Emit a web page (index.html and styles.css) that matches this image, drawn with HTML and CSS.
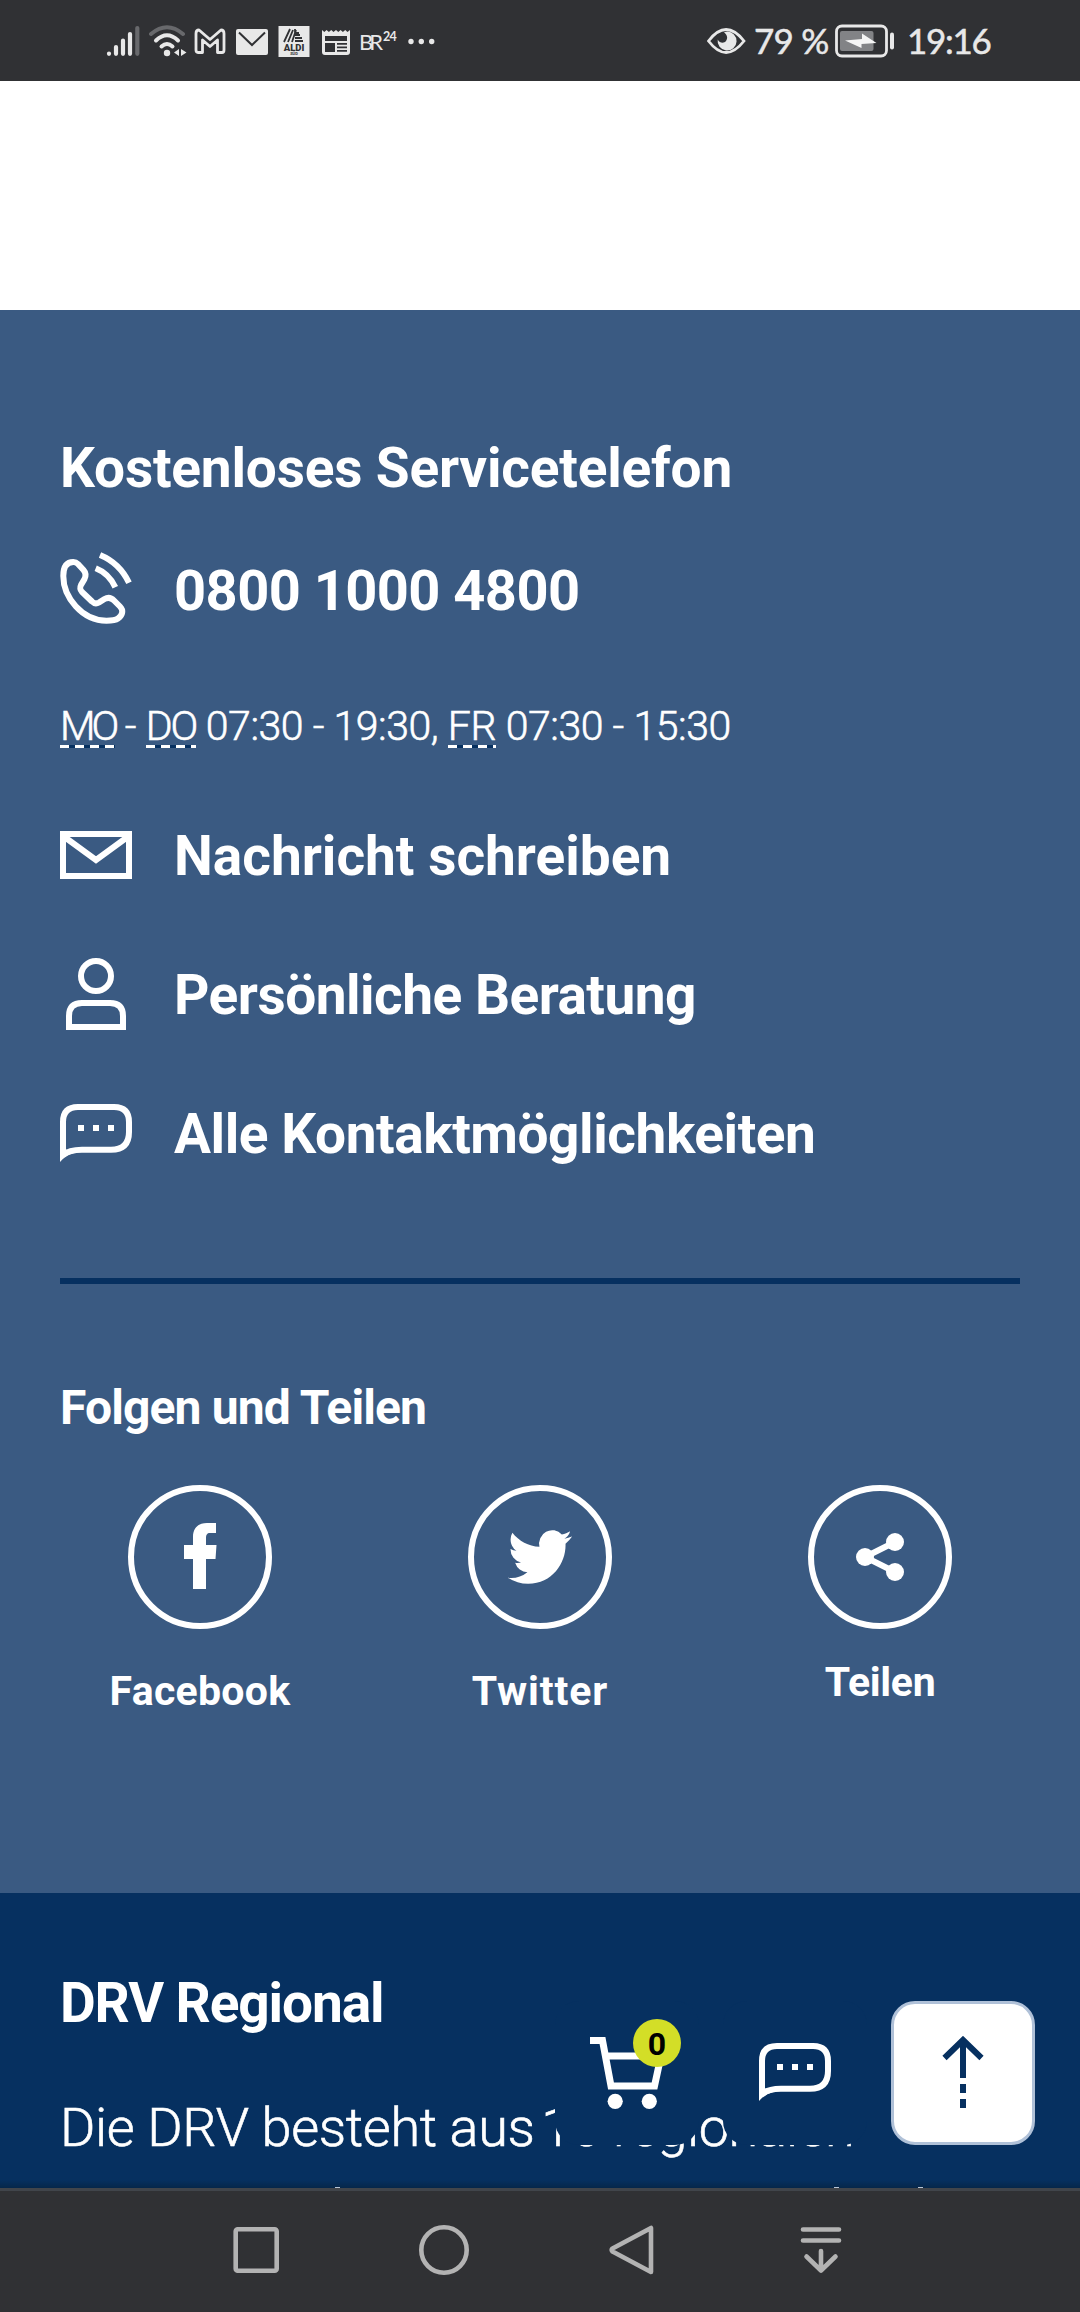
FILE: index.html
```
<!DOCTYPE html>
<html lang="de">
<head>
<meta charset="utf-8">
<title>Deutsche Rentenversicherung</title>
<link rel="stylesheet" href="styles.css">
</head>
<body>
<div class="statusbar">
  <div class="notifications">
    <svg class="signal" width="34" height="32" viewBox="0 0 34 32" fill="none" stroke="#e8e8e8" stroke-width="4.2" stroke-linecap="round">
      <path d="M3 28.5v.3M10 22v6.8M17 15.500v13.300M24 9v19.800"/><path d="M31.300 3v25.800" stroke="#68696c"/>
    </svg>
    <svg class="wifi" width="39" height="32" viewBox="0 0 39 32" fill="none" stroke="#e8e8e8" stroke-width="4" stroke-linecap="round">
      <path d="M2 9Q18 -4.500 34 9" stroke="#68696c"/><path d="M7 15.500Q18 5 29 15.500M12.500 21.500Q18 16.500 23.500 21.500"/><circle cx="18" cy="28" r="3.200" fill="#e8e8e8" stroke="none"/>
      <path d="M30 24v7l-5-3.500zM32 24l5.500 3.500-5.500 3.500z" fill="#e8e8e8" stroke="none"/>
    </svg>
    <svg class="gmail" width="32" height="32" viewBox="0 0 32 32" fill="none" stroke="#e8e8e8" stroke-width="2.800" stroke-linejoin="round">
      <path d="M2 8.500Q2 5 5 5L16 14.500 27 5Q30 5 30 8.500V25Q30 27.500 28 27.500H23.500V15L16 21.500 8.500 15V27.500H4Q2 27.500 2 25Z"/>
    </svg>
    <svg class="mail-note" width="32" height="32" viewBox="0 0 32 32"><rect y="4" width="32" height="26" rx="2" fill="#e8e8e8"/><path d="M3 7.500L16 20 29 7.500" fill="none" stroke="#303134" stroke-width="2"/></svg>
    <svg class="aldi" width="32" height="32" viewBox="0 0 32 32"><rect x=".5" y="1" width="31" height="31" fill="#e8e8e8"/><path d="M6 17L12 4M10 17L15 5M14 17L18 5M17 4v4h4M17 10h5M17 13h7M17 16h8" fill="none" stroke="#303134" stroke-width="1.800"/><text x="16" y="25.500" class="aldi-name">ALDI</text><text x="16" y="30.300" class="aldi-sub">SÜD</text></svg>
    <svg class="news" width="28" height="32" viewBox="0 0 28 32"><path d="M0 5l2.300 2 2.300-2 2.300 2 2.300-2 2.300 2 2.500-2 2.300 2 2.300-2 2.300 2 2.300-2 2.300 2 2.500-2V27q0 3-3 3H3q-3 0-3-3z" fill="#e8e8e8"/><path d="M3 11h22v5H3zM3 18h10v9H3zM15 18h10v1.800H15zM15 21.500h10v1.800H15zM15 25h10v1.800H15z" fill="#303134"/></svg>
    <div class="br">BR<sup>24</sup></div>
    <svg class="more" width="27" height="32" viewBox="0 0 27 32" fill="#e8e8e8"><circle cx="3" cy="16.500" r="2.700"/><circle cx="13.300" cy="16.500" r="2.700"/><circle cx="23.700" cy="16.500" r="2.700"/></svg>
  </div>
  <div class="system">
    <svg width="39" height="32" viewBox="0 0 39 32"><path d="M1.500 16Q19 -7 37 16Q19 39 1.500 16Z" fill="none" stroke="#e8e8e8" stroke-width="2.800"/><path d="M20 6.500a9.500 9.500 0 1 1-9.300 8c2 4 6.500 4 8.300 1.500 2.300-3.200 1-6-2-8.700z" fill="#e8e8e8"/></svg>
    <span class="percent">79 %</span>
    <svg width="60" height="34" viewBox="0 0 60 34"><rect x="1.500" y="2" width="50" height="30" rx="5.500" fill="none" stroke="#e8e8e8" stroke-width="2.800"/><rect x="5" y="7" width="33.500" height="20" rx="2" fill="#828386"/><path d="M10 16.500l17-1.500V9.500L41.500 19 26.500 20v4z" fill="#f5f5f5"/><rect x="55" y="8.500" width="4" height="17" rx="2" fill="#e8e8e8"/></svg>
    <span class="clock">19:16</span>
  </div>
</div>

<main>
<section class="contact">
  <h2 class="heading">Kostenloses Servicetelefon</h2>
  <a class="row phone">
    <svg width="72" height="72" viewBox="0 0 72 72" fill="none" stroke="#fff" stroke-width="6">
      <path d="M13.300 10C16 10 17 11 18 12L23.500 18C26.500 21.500 26 24 24.500 27L21 33C19.500 36 20 37.500 22 40L32 49.500C34.500 52 36.500 52 39 50.500L44.500 47C48 45 51 45.500 54 48.500L60 54.500C63.500 58 63 63 58 66.500C55 68.700 51 68.700 46.500 68.700C22 68.700 3.300 45 3.300 24C3.300 14.500 7 10 13.300 10Z"/>
      <path d="M35.700 16.300Q49 21.500 55.300 35.300M40 3Q59.500 11 69 30.700"/>
    </svg>
    <span>0800 1000 4800</span>
  </a>
  <p class="hours"><abbr class="mo">MO</abbr> - <abbr class="do">DO</abbr> 07:30 - 19:30, <abbr class="fr">FR</abbr> 07:30 - 15:30</p>
  <div class="links">
    <a class="row write">
      <svg width="72" height="72" viewBox="0 0 72 72" fill="none" stroke="#fff" stroke-width="6"><path d="M3 15H69V57H3ZM4.500 18L36 41 67.500 18"/></svg>
      <span>Nachricht schreiben</span>
    </a>
    <a class="row advice">
      <svg width="72" height="72" viewBox="0 0 72 72" fill="none" stroke="#fff" stroke-width="6"><circle cx="36" cy="18" r="15"/><path d="M9 69V58Q9 45 22 45H50Q63 45 63 58V69Z"/></svg>
      <span>Persönliche Beratung</span>
    </a>
    <a class="row all">
      <svg width="72" height="72" viewBox="0 -7 72 72" fill="none" stroke="#fff" stroke-width="6"><path d="M3 49V18Q3 3 18 3H54Q69 3 69 18V28Q69 45.700 51 45.700H22Q9 45.700 3 51"/><path d="M0 58V44L8 46 14 49Q6 51 0 58Z" fill="#fff" stroke="none"/><path d="M18 24h6M33 24h6M48 24h6"/></svg>
      <span>Alle Kontaktmöglichkeiten</span>
    </a>
  </div>
  <hr>
  <h3 class="follow">Folgen und Teilen</h3>
  <div class="social">
    <a class="facebook"><svg width="144" height="144" viewBox="0 0 144 144"><circle cx="72" cy="72" r="69" fill="none" stroke="#fff" stroke-width="6"/><path d="M65 104V74H56V60H65V52C65 43 70 38 79 38H88V48H82C79 48 78 50 78 53V60H88.500L87.500 74H78V104Z" fill="#fff"/></svg><span>Facebook</span></a>
    <a class="twitter"><svg width="144" height="144" viewBox="0 0 144 144"><circle cx="72" cy="72" r="69" fill="none" stroke="#fff" stroke-width="6"/><path transform="translate(40 39) scale(2.670 2.750)" d="M23.953 4.570a10 10 0 01-2.825.775 4.958 4.958 0 002.163-2.723c-.951.555-2.005.959-3.127 1.184a4.920 4.920 0 00-8.384 4.482C7.690 8.095 4.067 6.130 1.640 3.162a4.822 4.822 0 00-.666 2.475c0 1.710.870 3.213 2.188 4.096a4.904 4.904 0 01-2.228-.616v.060a4.923 4.923 0 003.946 4.827 4.996 4.996 0 01-2.212.085 4.936 4.936 0 004.604 3.417 9.867 9.867 0 01-6.102 2.105c-.390 0-.779-.023-1.170-.067a13.995 13.995 0 007.557 2.209c9.053 0 13.998-7.496 13.998-13.985 0-.210 0-.420-.015-.630A9.935 9.935 0 0024 4.590z" fill="#fff"/></svg><span>Twitter</span></a>
    <a class="share"><svg width="144" height="144" viewBox="0 0 144 144"><circle cx="72" cy="72" r="69" fill="none" stroke="#fff" stroke-width="6"/><path d="M87 57L57 72 87 87" fill="none" stroke="#fff" stroke-width="6"/><g fill="#fff"><circle cx="57" cy="72" r="9"/><circle cx="87" cy="57" r="9"/><circle cx="87" cy="87" r="9"/></g></svg><span>Teilen</span></a>
  </div>
</section>

<footer class="regional">
  <h2>DRV Regional</h2>
  <p>Die DRV besteht aus <span class="count">16 regionalen</span></p>
  <i class="ascender a1"></i><i class="ascender a2"></i><i class="ascender a3"></i>
  <div class="toolbar">
    <a class="tool cart">
      <svg width="80" height="72" viewBox="0 0 80 72" fill="none" stroke="#fff" stroke-width="7"><path d="M-1 3.500H12.500L21 49H64.500L71 19H14"/><g fill="#fff" stroke="none"><circle cx="25.200" cy="64.300" r="7.600"/><circle cx="59.300" cy="64.300" r="7.600"/></g></svg>
      <span class="badge">0</span>
    </a>
    <a class="tool chat">
      <svg width="72" height="72" viewBox="0 -7 72 72" fill="none" stroke="#fff" stroke-width="6"><path d="M3 49V18Q3 3 18 3H54Q69 3 69 18V28Q69 45.700 51 45.700H22Q9 45.700 3 51"/><path d="M0 58V44L8 46 14 49Q6 51 0 58Z" fill="#fff" stroke="none"/><path d="M18 24h6M33 24h6M48 24h6"/></svg>
    </a>
    <a class="tool top">
      <svg width="72" height="72" viewBox="0 0 72 72" fill="none" stroke="#063060" stroke-width="6"><path d="M17.500 22L36 4 54.500 22M36 4V42M36 48V57M36 63V72"/></svg>
    </a>
  </div>
</footer>
</main>

<nav class="navbar">
  <svg width="50" height="50" viewBox="0 0 50 50"><rect x="4.700" y="4.300" width="41" height="41.500" rx="2"/></svg>
  <svg width="50" height="50" viewBox="0 0 50 50"><circle cx="25" cy="25" r="22.700"/></svg>
  <svg width="50" height="50" viewBox="0 0 50 50"><path d="M44 3V47L5.500 26.500Q4 25 5.500 23.500Z"/></svg>
  <svg width="50" height="50" viewBox="0 0 50 50"><path d="M8 4.500H44M8 15.500H44M26 26V45M11.500 31.500L26 45.500 40.500 31.500"/></svg>
</nav>
</body>
</html>
```
FILE: styles.css
```
* { box-sizing: border-box; }
body { margin: 0; width: 1080px; background: #fff; color: #fff; font-family: Roboto, "Liberation Sans", sans-serif; }
h2, h3, p { margin: 0; }
svg { display: block; flex: none; }

/* Android status bar */
.statusbar { height: 81px; background: #303134; color: #e8e8e8; display: flex; align-items: center; justify-content: space-between; padding: 0 89px 0 106px; }
.notifications, .system { display: flex; align-items: center; }
.wifi { margin-left: 9px; }
.gmail { margin-left: 6px; }
.mail-note, .aldi { margin-left: 10px; }
.news { margin-left: 12px; }
.aldi-name { font: 900 9.5px Roboto, sans-serif; text-anchor: middle; fill: #303134; }
.aldi-sub { font: 700 4px Roboto, sans-serif; text-anchor: middle; fill: #303134; }
.br { margin-left: 9px; width: 36px; height: 32px; display: flex; font: 400 22px/33px Lato, sans-serif; letter-spacing: -4px; }
.br sup { font-size: 12.5px; line-height: 24px; letter-spacing: -0.8px; margin-left: 4px; font-weight: 700; }
.more { margin-left: 13px; }
.percent, .clock { font: 400 35px/79px Lato, sans-serif; white-space: nowrap; -webkit-text-stroke: 0.5px #e8e8e8; }
.percent { margin-left: 8px; width: 81px; letter-spacing: -0.8px; }
.clock { margin-left: 12px; width: 84px; letter-spacing: -1.3px; }

/* Contact area */
.contact { margin-top: 229px; height: 1583px; padding: 125px 60px 0; background: #3a5a82; }
.heading { font-size: 55px; line-height: 66px; letter-spacing: -0.2px; }
.row { display: flex; gap: 42px; height: 72px; font-size: 55px; line-height: 74px; font-weight: 700; white-space: nowrap; }
.phone { margin-top: 51px; font-size: 56px; line-height: 78px; letter-spacing: -0.56px; }
.hours { margin-top: 77px; font-size: 41px; line-height: 50px; font-weight: 300; letter-spacing: -0.45px; white-space: nowrap; -webkit-text-stroke: 0.6px #fff; }
.hours abbr { background: repeating-linear-gradient(90deg, #fff 0 9px, #063060 9px 15px) 0 calc(100% - 2px) / 100% 3px no-repeat; }
.mo { letter-spacing: -4px; }
.do { letter-spacing: -2px; }
.fr { letter-spacing: -0.4px; }
.links { margin-top: 68px; display: flex; flex-direction: column; gap: 67px; }
.advice { letter-spacing: -0.51px; }
.all { letter-spacing: -0.44px; }
.contact hr { height: 6px; margin: 109px 0 95px; border: 0; background: #063060; }
.follow { font-size: 48px; line-height: 58px; letter-spacing: -0.88px; }
.social { margin: 48px -30px 0; display: grid; grid-template-columns: repeat(3, 340px); }
.social a { display: flex; flex-direction: column; align-items: center; gap: 37px; font-size: 41px; line-height: 50px; font-weight: 700; }
.facebook { letter-spacing: 0.3px; }
.twitter { letter-spacing: 0.9px; }
.social .share { gap: 28px; letter-spacing: -0.3px; }

/* Dark footer */
.regional { position: relative; height: 295px; padding: 77px 60px 0; overflow: hidden; background: linear-gradient(#063060 calc(100% - 8px), #06274a); }
.regional h2 { font-size: 55px; line-height: 66px; letter-spacing: -1.12px; }
.regional p { margin-top: 59px; font-size: 54px; line-height: 66px; font-weight: 300; letter-spacing: -0.34px; white-space: nowrap; -webkit-text-stroke: 0.6px #fff; }
.count { margin-left: -6px; letter-spacing: -0.5px; }
.ascender { position: absolute; bottom: 0; width: 5px; height: 1px; background: #b9c6d6; }
.a1 { left: 335px; }
.a2 { left: 834px; }
.a3 { left: 918px; }
.toolbar { position: absolute; right: 45px; top: 108px; display: flex; gap: 24px; }
.tool { position: relative; width: 144px; height: 144px; border-radius: 24px; background: #063060; display: flex; align-items: center; justify-content: center; }
.cart { padding-left: 6px; }
.chat { padding-bottom: 2px; }
.top { background: #fff; border: 3px solid #b0c1d8; padding-bottom: 2px; }
.badge { position: absolute; left: 78px; top: 18px; width: 48px; height: 48px; border-radius: 50%; background: #d3de27; color: #000; font-size: 32px; line-height: 51px; font-weight: 700; text-align: center; }

/* Android navigation bar */
.navbar { height: 124px; padding-left: 162px; background: #303134; border-top: 3px solid #41454b; display: grid; grid-template-columns: repeat(4, 188px); align-items: center; justify-items: center; padding-bottom: 3px; fill: none; stroke: #b3b3b3; stroke-width: 4.6; stroke-linecap: round; stroke-linejoin: round; }
```
